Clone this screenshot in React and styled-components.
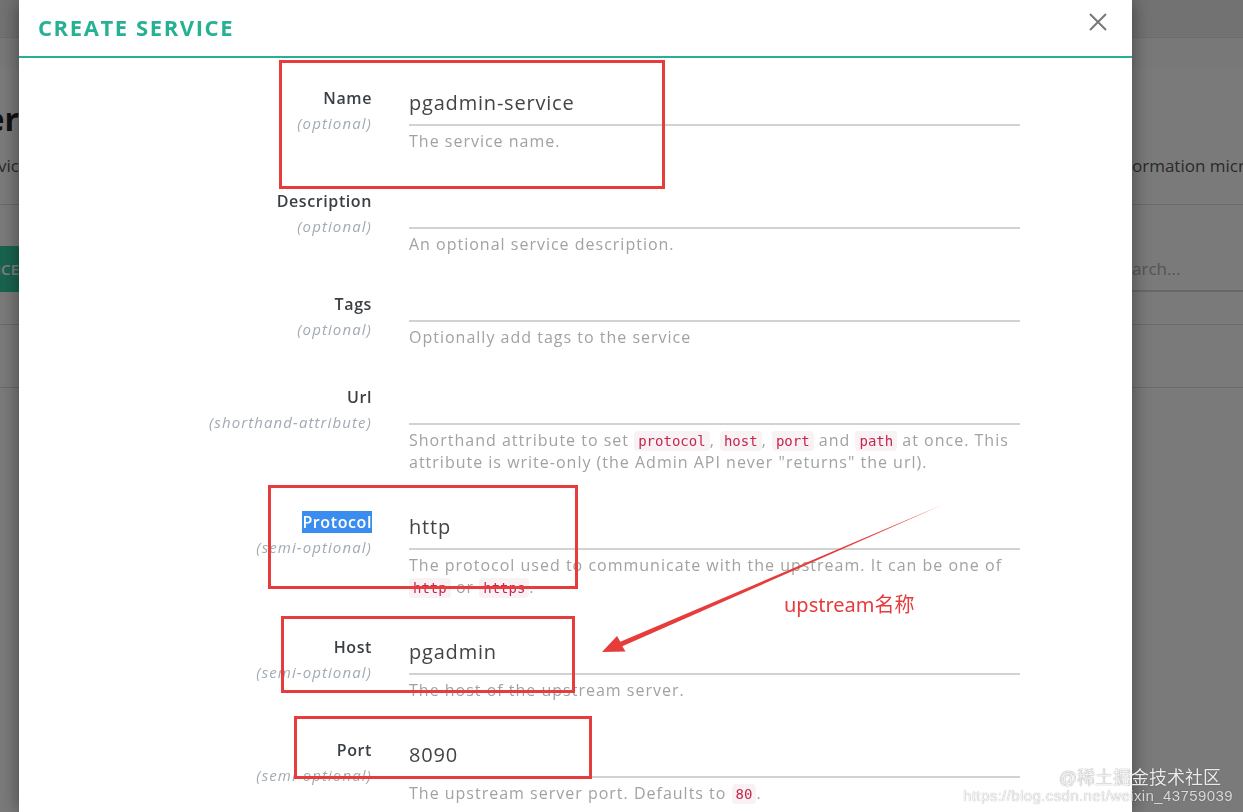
import React from 'react'
import styled, { createGlobalStyle } from 'styled-components'

const GlobalStyle = createGlobalStyle`
  html, body {
    margin: 0;
    padding: 0;
    overflow: hidden;
  }
  body {
    font-family: "Open Sans", "Noto Sans", sans-serif;
    background: #f4f4f4;
  }
`

const teal = '#27b193'
const red = '#e63c3c'

// ---- background page (dimmed by the overlay) ----
const BgPage = styled.div`
  width: 100vw;
  height: 100vh;
  overflow: hidden;
  display: flex;
  flex-direction: column;
  background: #f4f4f4;
`
const TopBar = styled.div`
  height: 37px;
  flex: none;
  background: #e4e4e4;
  border-bottom: 1px solid #d8d8d8;
`
const SubBar = styled.div`
  height: 30px;
  flex: none;
  background: #f0f0f0;
`
const BgRow = styled.div`
  display: flex;
  justify-content: space-between;
  align-items: ${p => p.$align || 'center'};
  box-sizing: border-box;
  height: ${p => p.$h}px;
  padding-top: ${p => p.$pt || 0}px;
  flex: none;
  border-bottom: ${p => (p.$line ? '1px solid #d4d4d4' : 'none')};
`
const Clip = styled.div`
  width: ${p => p.$w}px;
  overflow: hidden;
  display: flex;
  justify-content: ${p => (p.$end ? 'flex-end' : 'flex-start')};
  white-space: nowrap;
  font-size: ${p => p.$size || 17}px;
  font-weight: ${p => p.$weight || 400};
  color: ${p => p.$color || '#555'};
`
const GreenBtn = styled.div`
  height: 46px;
  width: 19px;
  background: #32c79c;
  color: #fff;
  font-size: 15px;
  font-weight: 600;
  display: flex;
  align-items: center;
  justify-content: flex-end;
  overflow: hidden;
  white-space: nowrap;
`
const SearchBox = styled.div`
  width: 111px;
  height: 44px;
  border-bottom: 2px solid #cfcfcf;
  display: flex;
  align-items: center;
  overflow: hidden;
  white-space: nowrap;
  color: #aaa;
  font-size: 17px;
`

// ---- overlay and modal ----
const Overlay = styled.div`
  position: fixed;
  inset: 0;
  background: rgba(0, 0, 0, 0.5);
  padding-left: 19px;
  display: flex;
  align-items: flex-start;
`
const Modal = styled.div`
  width: 1113px;
  min-height: 100vh;
  background: #fff;
  box-shadow: 0 0 18px rgba(0, 0, 0, 0.45);
  display: flex;
  flex-direction: column;
`
const Header = styled.div`
  height: 58px;
  box-sizing: border-box;
  flex: none;
  display: flex;
  align-items: flex-start;
  justify-content: space-between;
  padding: 14px 25px 0 19px;
  border-bottom: 2px solid ${teal};
`
const Title = styled.h2`
  margin: 0;
  color: ${teal};
  font-size: 22px;
  line-height: 27px;
  font-weight: 700;
  letter-spacing: 1.6px;
  text-transform: uppercase;
`
const CloseBtn = styled.button`
  border: 0;
  background: none;
  padding: 0;
  width: 18px;
  height: 18px;
  margin-top: -1px;
  cursor: pointer;
  display: flex;
`
const Body = styled.div`
  padding-top: 22px;
  display: flex;
  flex-direction: column;
  gap: 31px;
`
const Row = styled.div`
  display: grid;
  grid-template-columns: 353px 611px;
  column-gap: 37px;
`
const LabelCol = styled.div`
  text-align: right;
  padding-top: 6px;
  line-height: 25px;
`
const Label = styled.div`
  font-size: 16px;
  font-weight: 600;
  color: #3a3f44;
  letter-spacing: 0.6px;
`
const Highlight = styled.span`
  background: #3a8dee;
  color: #fff;
`
const Sub = styled.div`
  font-size: 15px;
  font-style: italic;
  color: #a2aab3;
  letter-spacing: 1.1px;
`
const Input = styled.div`
  height: ${p => (p.$compact ? 34 : 44)}px;
  border-bottom: 2px solid #d2d2d2;
  display: flex;
  align-items: center;
  font-size: 20px;
  color: #444;
  letter-spacing: 0.8px;
`
const Help = styled.div`
  margin-top: 4px;
  margin-right: -6px;
  font-size: 16px;
  line-height: 22px;
  color: #a2a2a2;
  letter-spacing: 1px;
`
const Code = styled.code`
  font-family: "DejaVu Sans Mono", "Liberation Mono", monospace;
  font-size: 14px;
  line-height: 1;
  color: #c7254e;
  background: #f9f2f4;
  padding: 2px 4px;
  border-radius: 4px;
  letter-spacing: 0;
`

// ---- annotations over the screenshot ----
const Mark = styled.div`
  position: fixed;
  border: 3px solid ${red};
  box-sizing: border-box;
  pointer-events: none;
`
const Note = styled.div`
  position: fixed;
  left: 784px;
  top: 589px;
  color: ${red};
  font-family: "Noto Sans", "Noto Sans CJK SC", sans-serif;
  font-size: 20px;
  white-space: nowrap;
`
const ArrowSvg = styled.svg`
  position: fixed;
  left: 0;
  top: 0;
  pointer-events: none;
`
const Watermark = styled.div`
  position: fixed;
  right: 10px;
  bottom: 8px;
  text-align: right;
  color: rgba(255, 255, 255, 0.9);
  text-shadow: 0 0 1px rgba(0, 0, 0, 0.6);
  font-family: "Liberation Sans", "Noto Sans CJK SC", sans-serif;
  line-height: 17px;
`
const WmTop = styled.div`
  font-size: 18px;
  margin-right: 12px;
`
const WmUrl = styled.div`
  font-size: 15px;
  letter-spacing: 0.4px;
  opacity: 0.85;
`

const fields = [
  { label: 'Name', sub: '(optional)', value: 'pgadmin-service', help: 'The service name.' },
  { label: 'Description', sub: '(optional)', help: 'An optional service description.' },
  { label: 'Tags', sub: '(optional)', compact: true, help: 'Optionally add tags to the service' },
  {
    label: 'Url',
    sub: '(shorthand-attribute)',
    help: (
      <>
        Shorthand attribute to set <Code>protocol</Code>, <Code>host</Code>, <Code>port</Code> and{' '}
        <Code>path</Code> at once. This attribute is write-only (the Admin API never "returns" the url).
      </>
    )
  },
  {
    label: 'Protocol',
    highlight: true,
    sub: '(semi-optional)',
    value: 'http',
    help: (
      <>
        The protocol used to communicate with the upstream. It can be one of <Code>http</Code> or{' '}
        <Code>https</Code>.
      </>
    )
  },
  { label: 'Host', sub: '(semi-optional)', value: 'pgadmin', help: 'The host of the upstream server.' },
  {
    label: 'Port',
    sub: '(semi-optional)',
    value: '8090',
    help: (
      <>
        The upstream server port. Defaults to <Code>80</Code>.
      </>
    )
  }
]

const marks = [
  { l: 279, t: 60, w: 386, h: 129 },
  { l: 268, t: 485, w: 310, h: 104 },
  { l: 281, t: 616, w: 294, h: 77 },
  { l: 294, t: 716, w: 298, h: 63 }
]

export default function App () {
  return (
    <>
      <GlobalStyle />
      <BgPage>
        <TopBar />
        <SubBar />
        <BgRow $h={72} $align='flex-end'>
          <Clip $w={19} $end $size={32} $weight={700} $color='#222'>Ser</Clip>
        </BgRow>
        <BgRow $h={50}>
          <Clip $w={19} $end>Servic</Clip>
          <Clip $w={111}>ormation microservices</Clip>
        </BgRow>
        <BgRow $h={15} $line />
        <BgRow $h={120} $line $align='flex-start' $pt={41}>
          <GreenBtn>ADD NEW SERVICE</GreenBtn>
          <SearchBox>arch...</SearchBox>
        </BgRow>
        <BgRow $h={63} $line />
      </BgPage>

      <Overlay>
        <Modal>
          <Header>
            <Title>Create Service</Title>
            <CloseBtn aria-label='close'>
              <svg width='18' height='18' viewBox='0 0 18 18'>
                <path d='M1 1 L17 17 M17 1 L1 17' stroke='#777' strokeWidth='2' fill='none' />
              </svg>
            </CloseBtn>
          </Header>
          <Body>
            {fields.map(f => (
              <Row key={f.label}>
                <LabelCol>
                  <Label>{f.highlight ? <Highlight>{f.label}</Highlight> : f.label}</Label>
                  <Sub>{f.sub}</Sub>
                </LabelCol>
                <div>
                  <Input $compact={f.compact}>{f.value}</Input>
                  <Help>{f.help}</Help>
                </div>
              </Row>
            ))}
          </Body>
        </Modal>
      </Overlay>

      {marks.map((m, i) => (
        <Mark key={i} style={{ left: m.l, top: m.t, width: m.w, height: m.h }} />
      ))}
      <ArrowSvg width='1243' height='812'>
        <polygon
          points='942,505 620.3,641.7 617,636 602,652 625.5,651.5 622.3,646.3'
          fill={red}
        />
      </ArrowSvg>
      <Note>upstream名称</Note>
      <Watermark>
        <WmTop>@稀土掘金技术社区</WmTop>
        <WmUrl>https://blog.csdn.net/weixin_43759039</WmUrl>
      </Watermark>
    </>
  )
}
